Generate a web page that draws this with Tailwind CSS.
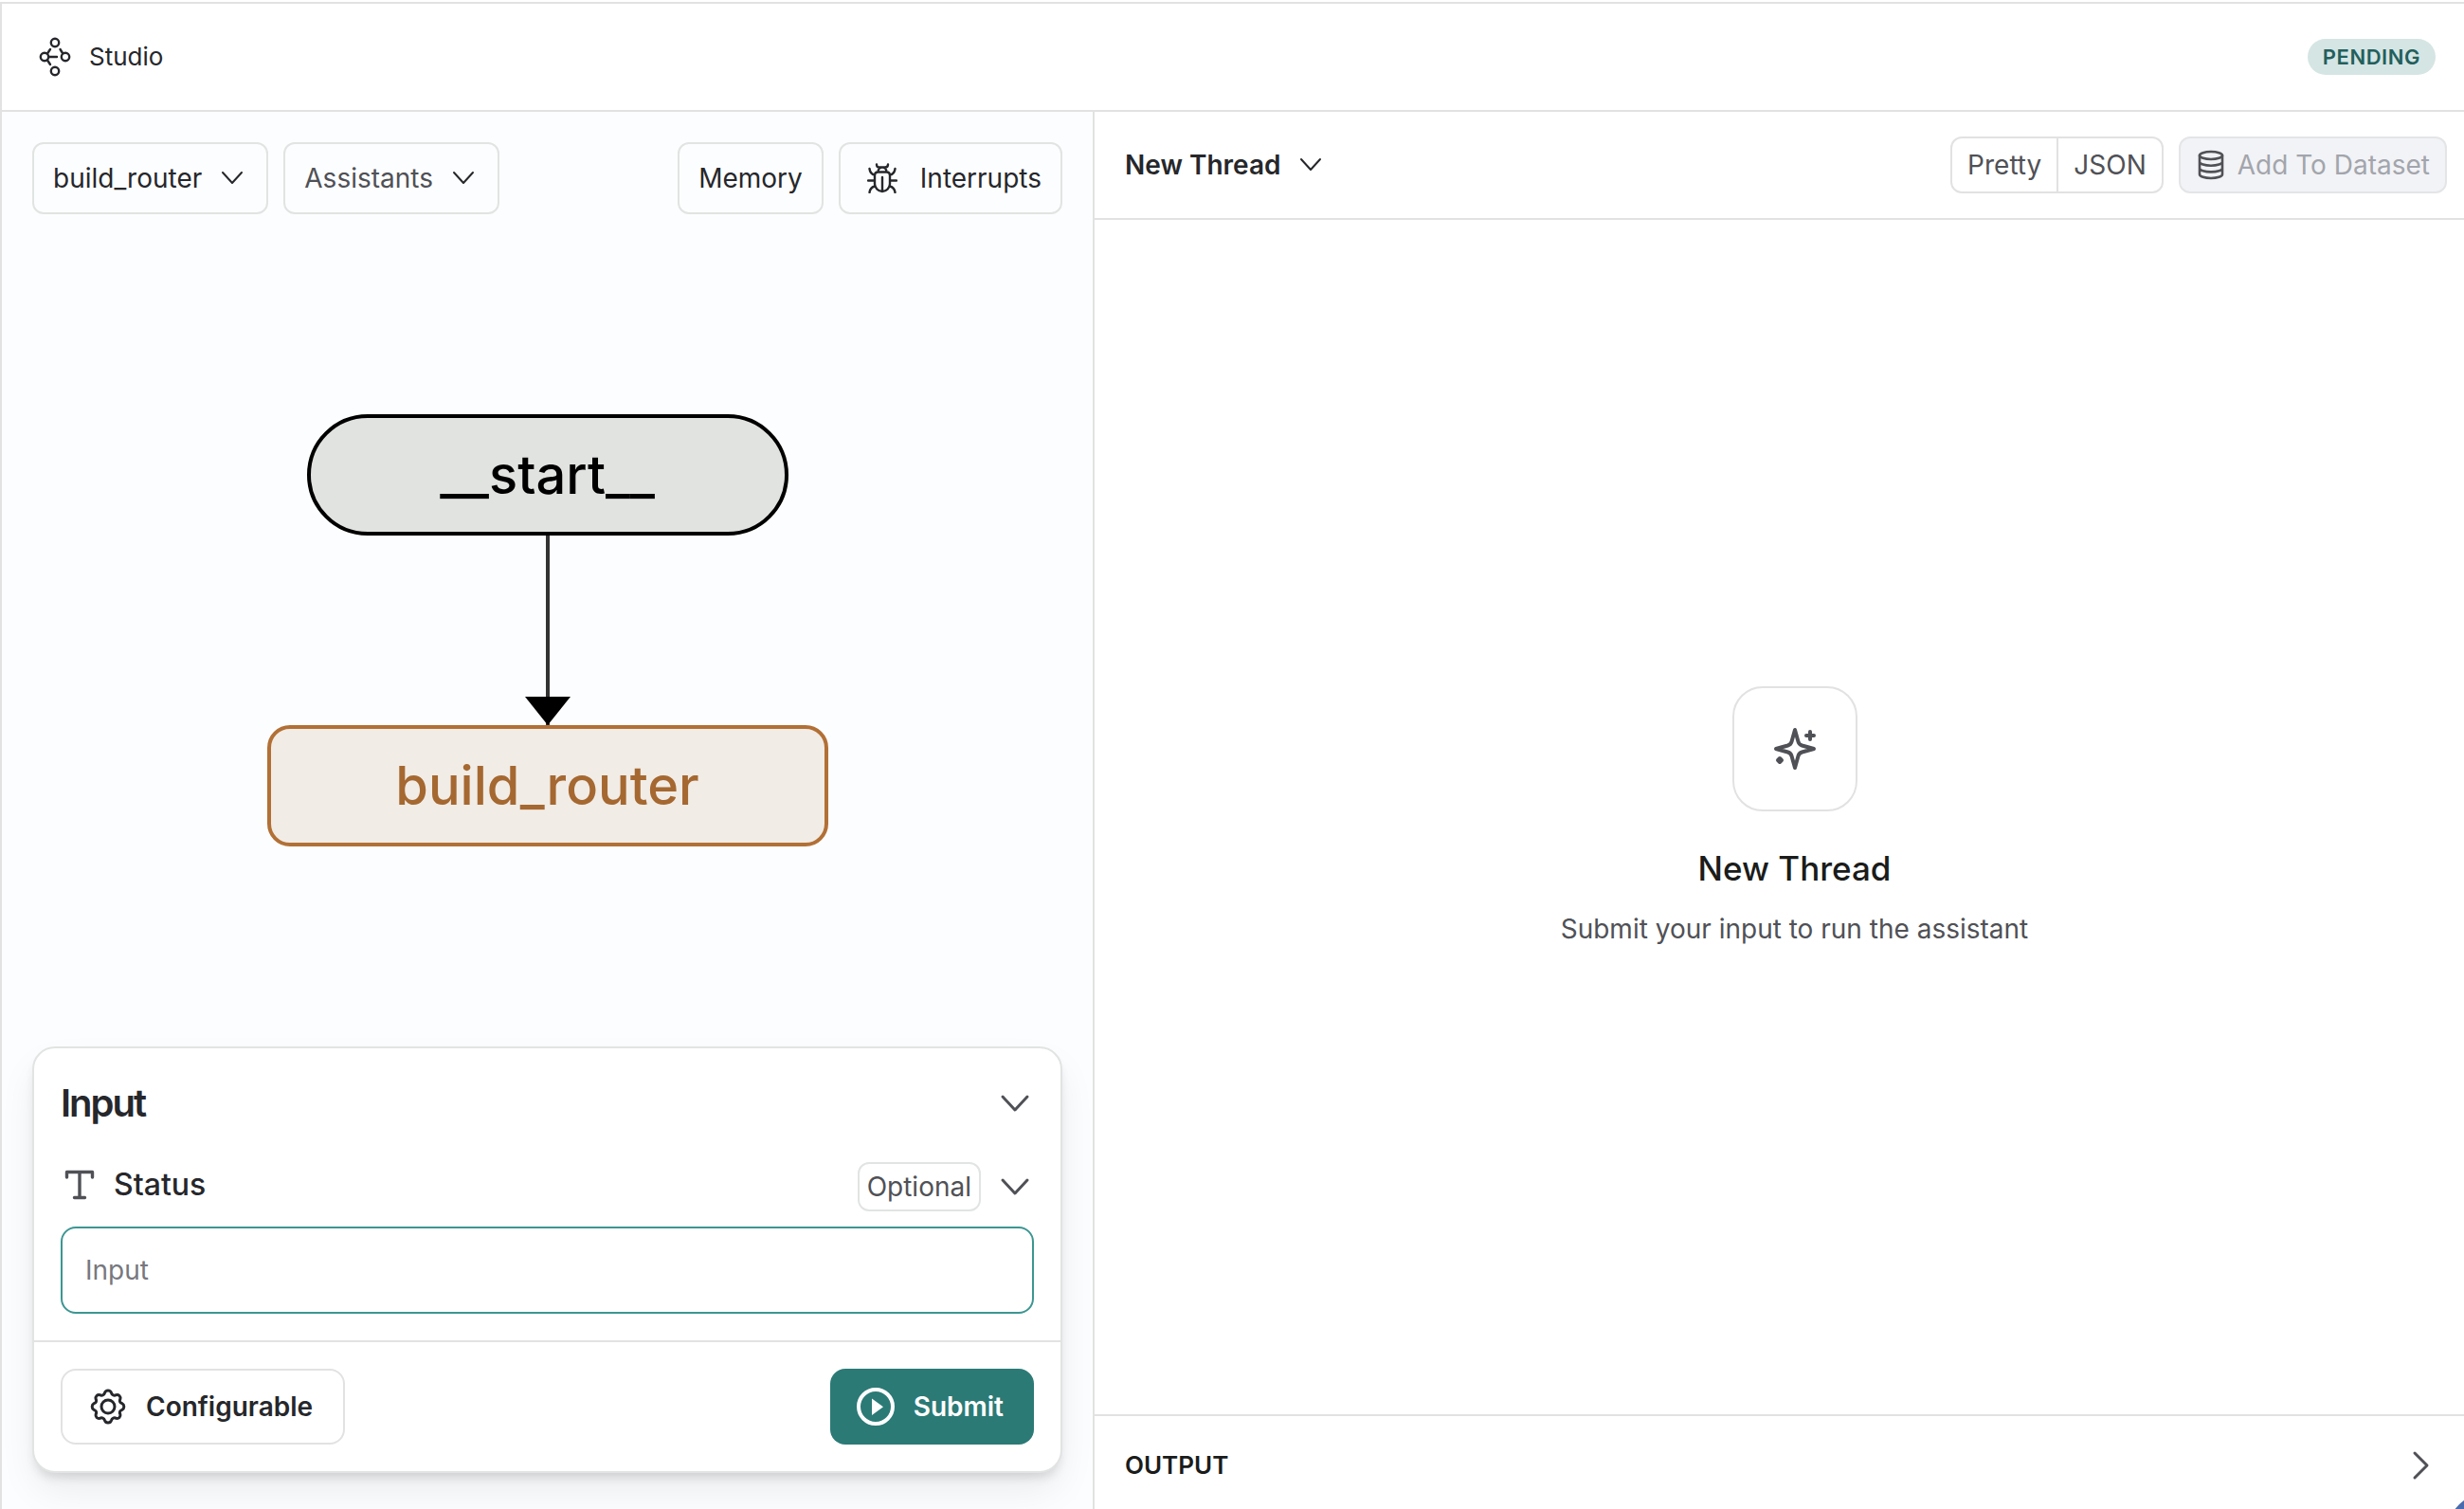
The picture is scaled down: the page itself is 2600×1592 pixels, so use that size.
<!DOCTYPE html>
<html lang="en">
<head>
<meta charset="utf-8">
<title>Studio</title>
<script src="https://cdn.jsdelivr.net/npm/@tailwindcss/browser@4"></script>
</head>
<body class="bg-white font-['Inter',sans-serif] text-[28px] leading-[40px] text-[#26272b]">
<div class="pt-[2px] min-h-screen flex flex-col">
  <div class="flex-1 flex flex-col border-t-2 border-l-2 border-[#e1e2e1]">
  <header class="flex items-center justify-between h-[114px] border-b-2 border-[#e1e2e1] pl-10 pr-[30px] shrink-0">
    <div class="flex items-center gap-5">
      <svg class="w-8 h-10 overflow-visible" viewBox="0 0 32 40" fill="none" stroke="currentColor" stroke-width="2.4" stroke-linecap="round">
        <circle cx="16" cy="5" r="4.2"/><circle cx="5" cy="20" r="4.2"/><circle cx="27" cy="20" r="4.2"/><circle cx="16" cy="35" r="4.2"/>
        <path d="M8 16.500L11 12M21.500 12l2.500 4M10 20h8M8 23.500L11 28"/>
      </svg>
      <h1 class="text-[26px]">Studio</h1>
    </div>
    <span class="rounded-full bg-[#d5e5e4] text-[#235f5c] text-[22px] leading-[38px] font-semibold px-4 tracking-wide">PENDING</span>
  </header>

  <main class="flex-1 grid grid-cols-[1153fr_1445fr]">
    <section class="flex flex-col bg-[#fcfdfe] border-r-2 border-[#e1e2e1] px-8 pt-8 pb-[38px]">
      <div class="flex justify-between">
        <div class="flex gap-4">
          <button class="flex items-center gap-4 rounded-xl border-2 border-[#e1e4e2] py-4 px-5">build_router
            <svg class="size-8" viewBox="0 0 32 32" fill="none" stroke="currentColor" stroke-width="2" stroke-linecap="round" stroke-linejoin="round"><path d="M6 10l10 11 10-11"/></svg>
          </button>
          <button class="flex items-center gap-4 rounded-xl border-2 border-[#e1e4e2] py-4 px-5 text-[#505156]">Assistants
            <svg class="size-8 text-[#26272b]" viewBox="0 0 32 32" fill="none" stroke="currentColor" stroke-width="2" stroke-linecap="round" stroke-linejoin="round"><path d="M6 10l10 11 10-11"/></svg>
          </button>
        </div>
        <div class="flex gap-4">
          <button class="rounded-xl border-2 border-[#e1e4e2] py-4 px-5">Memory</button>
          <button class="flex items-center gap-6 rounded-xl border-2 border-[#e1e4e2] py-4 pl-7 pr-5">
            <svg class="size-8" viewBox="0 0 32 32" fill="none" stroke="currentColor" stroke-width="2.4" stroke-linecap="round" stroke-linejoin="round"><path d="M10 1.500c0 2 1 3 3 3h6c2 0 3-1 3-3M11.500 9.500c0-6.500 9-6.500 9 0M8 13c0-2.500 1.500-3.500 3.500-3.500h9c2 0 3.500 1 3.500 3.500v9c0 4-3.500 8-8 8s-8-4-8-8zM16 15v15M1 18.500h7M24 18.500h7M2.500 6c.5 4 2 6 5.500 6.500M29.500 6c-.5 4-2 6-5.500 6.500M2.500 31c.5-4 2-5.500 5.500-6.500M29.500 31c-.5-4-2-5.500-5.500-6.500"/></svg>
            Interrupts
          </button>
        </div>
      </div>

      <div class="flex-1 flex flex-col items-center justify-center text-[56px] leading-[80px] font-medium">
        <div class="w-[508px] h-32 flex items-center justify-center rounded-full border-4 border-black bg-[#e1e3e0] text-black">__start__</div>
        <svg class="w-12 h-[200px]" viewBox="0 0 48 200"><path d="M24 0v200" stroke="#333" stroke-width="4"/><path d="M0 170h48L24 200z"/></svg>
        <div class="w-[592px] h-32 flex items-center justify-center rounded-3xl border-4 border-[#b27036] bg-[#f1ece6] text-[#a56831]">build_router</div>
      </div>

      <form class="rounded-3xl border-2 border-[#e1e4e2] bg-white shadow-[0_20px_40px_-4px_rgb(16_24_40/0.08),0_8px_12px_-4px_rgb(0_0_0/0.14)]">
        <div class="p-7">
          <div class="flex items-center justify-between leading-[60px]">
            <h2 class="text-[40px] font-semibold tracking-tighter">Input</h2>
            <button type="button" aria-label="Collapse input" class="text-[#505156]"><svg class="size-10" viewBox="0 0 40 40" fill="none" stroke="currentColor" stroke-width="3" stroke-linecap="round" stroke-linejoin="round"><path d="M7 13l13 14 13-14"/></svg></button>
          </div>
          <div class="flex items-start justify-between mt-8">
            <label for="status" class="flex items-center gap-4 text-[32px] leading-[48px] font-medium">
              <svg class="size-10 text-[#505156]" viewBox="0 0 40 40" fill="none" stroke="currentColor" stroke-width="3.400" stroke-linecap="round" stroke-linejoin="round"><path d="M6.500 12V6.500h27V12M20 6.500v27M14.500 33.500h11"/></svg>
              Status
            </label>
            <div class="flex items-center gap-4 text-[#505156]">
              <span class="rounded-xl border-2 border-[#e1e4e2] px-2 leading-[48px]">Optional</span>
              <button type="button" aria-label="Collapse status"><svg class="size-10" viewBox="0 0 40 40" fill="none" stroke="currentColor" stroke-width="3" stroke-linecap="round" stroke-linejoin="round"><path d="M7 13l13 14 13-14"/></svg></button>
            </div>
          </div>
          <input id="status" type="text" placeholder="Input" class="block w-full h-[92px] mt-4 rounded-2xl border-2 border-[#3c9692] px-6 outline-none placeholder:text-[#77787d]">
        </div>
        <div class="flex justify-between border-t-2 border-[#e1e2e1] p-7">
          <button type="button" class="flex items-center gap-5 h-20 rounded-2xl border-2 border-[#e1e2e1] pl-7 pr-8 font-semibold">
            <svg class="size-10" viewBox="0 0 40 40" fill="none" stroke="currentColor" stroke-width="3" stroke-linejoin="round"><circle cx="20" cy="20" r="7"/><path d="M16.500 5.500a3.700 3.700 0 0 1 7 0c.7 2.500 3 3.400 5.200 2.100a3.500 3.500 0 0 1 4.200 4.200c-1.200 2.300-.5 4 1.900 4.900a3.700 3.700 0 0 1 0 6.600c-2.400.9-3.100 2.600-1.900 4.900a3.500 3.500 0 0 1-4.200 4.200c-2.200-1.300-4.500-.4-5.200 2.100a3.700 3.700 0 0 1-7 0c-.7-2.500-3-3.400-5.200-2.100a3.500 3.500 0 0 1-4.200-4.200c1.200-2.300.5-4-1.900-4.900a3.700 3.700 0 0 1 0-6.600c2.400-.9 3.100-2.600 1.900-4.900a3.500 3.500 0 0 1 4.200-4.200c2.200 1.300 4.500.4 5.200-2.100z"/></svg>
            Configurable
          </button>
          <button type="submit" class="flex items-center gap-5 h-20 rounded-2xl bg-[#2b7a76] text-white pl-7 pr-8 font-semibold">
            <svg class="size-10" viewBox="0 0 40 40"><circle cx="20" cy="20" r="18" fill="none" stroke="currentColor" stroke-width="4"/><path d="M16 11.500v17.500l12-8.750z" fill="currentColor"/></svg>
            Submit
          </button>
        </div>
      </form>
    </section>

    <section class="flex flex-col min-w-0">
      <div class="flex items-center justify-between h-[114px] border-b-2 border-[#e1e2e1] pl-8 pr-[18px]">
        <button class="flex items-center gap-4 font-semibold">New Thread
          <svg class="size-8" viewBox="0 0 32 32" fill="none" stroke="currentColor" stroke-width="2" stroke-linecap="round" stroke-linejoin="round"><path d="M6 10l10 11 10-11"/></svg>
        </button>
        <div class="flex gap-4 text-[#505156] leading-[56px]">
          <div class="flex rounded-xl border-2 border-[#e1e2e1]">
            <button class="px-4 border-r-2 border-[#e1e2e1]">Pretty</button>
            <button class="px-4">JSON</button>
          </div>
          <button disabled class="flex items-center gap-3 rounded-xl border-2 border-[#e4e5e7] bg-[#f2f3f6] px-4 text-[#a2a5ac]">
            <svg class="size-8 text-[#505156]" viewBox="0 0 32 32" fill="none" stroke="currentColor" stroke-width="2.600" stroke-linecap="round"><ellipse cx="16" cy="6" rx="12" ry="4"/><path d="M4 6v20c0 2.200 5.400 4 12 4s12-1.800 12-4V6M4 12.700c0 2.200 5.400 4 12 4s12-1.800 12-4M4 19.400c0 2.200 5.400 4 12 4s12-1.800 12-4"/></svg>
            Add To Dataset
          </button>
        </div>
      </div>
      <div class="flex-1 flex flex-col items-center justify-center pl-8">
        <div class="size-[132px] flex items-center justify-center rounded-[32px] border-2 border-[#e1e2e1] text-[#505156]">
          <svg class="size-12" viewBox="0 0 48 48" fill="none" stroke="currentColor" stroke-width="4" stroke-linecap="round" stroke-linejoin="round"><path d="M24 4l3.500 12.500q.8 3 4 4L44 24l-12.500 3.500q-3.200 1-4 4L24 44l-3.500-12.500q-.8-3-4-4L4 24l12.500-3.500q3.200-1 4-4z"/><path d="M40 6v8M36 10h8"/><path d="M8 34l2 2-2 2-2-2z" fill="currentColor"/></svg>
        </div>
        <h3 class="mt-9 text-[35px] leading-[48px] font-medium text-[#1a1c1b]">New Thread</h3>
        <p class="mt-5 text-[#505156]">Submit your input to run the assistant</p>
      </div>
      <button class="flex items-center justify-between h-[100px] border-t-2 border-[#e1e2e1] pt-1.5 pl-8 pr-[26px] text-[26px] font-semibold text-[#1a1c1b]">OUTPUT
        <svg class="size-10 text-[#505156]" viewBox="0 0 40 40" fill="none" stroke="currentColor" stroke-width="3" stroke-linecap="round" stroke-linejoin="round"><path d="M14 7l13 13-13 13"/></svg>
      </button>
    </section>
  </main>
  </div>
</div>
<div class="fixed -right-[77px] -bottom-[77px] size-24 rounded-full bg-[#4a6cae]"></div>
</body>
</html>
